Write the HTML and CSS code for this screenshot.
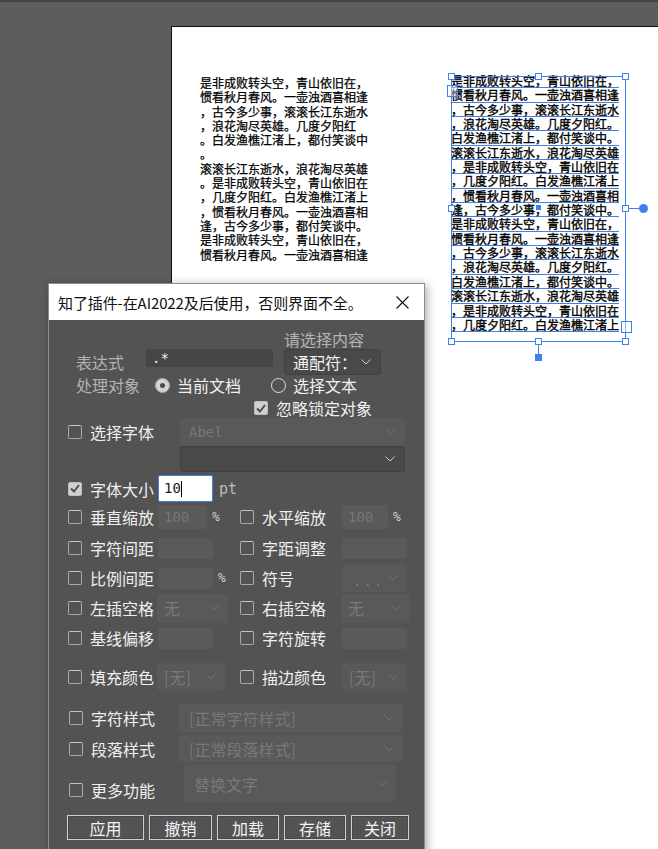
FILE: index.html
```html
<!DOCTYPE html>
<html lang="zh">
<head>
<meta charset="utf-8">
<title>知了插件</title>
<link rel="stylesheet" href="styles.css">
</head>
<body>
<div class="app">
  <div class="topstrip"></div>
  <div class="page">
    <div class="text-left">
      <div>是非成败转头空，青山依旧在，</div>
      <div>惯看秋月春风。一壶浊酒喜相逢</div>
      <div>，古今多少事，滚滚长江东逝水</div>
      <div>，浪花淘尽英雄。几度夕阳红</div>
      <div>。白发渔樵江渚上，都付笑谈中</div>
      <div>。</div>
      <div>滚滚长江东逝水，浪花淘尽英雄</div>
      <div>。是非成败转头空，青山依旧在</div>
      <div>，几度夕阳红。白发渔樵江渚上</div>
      <div>，惯看秋月春风。一壶浊酒喜相</div>
      <div>逢，古今多少事，都付笑谈中。</div>
      <div>是非成败转头空，青山依旧在，</div>
      <div>惯看秋月春风。一壶浊酒喜相逢</div>
    </div>
    <div class="text-right">
      <div>是非成败转头空，青山依旧在，</div>
      <div>惯看秋月春风。一壶浊酒喜相逢</div>
      <div>，古今多少事，滚滚长江东逝水</div>
      <div>，浪花淘尽英雄。几度夕阳红。</div>
      <div>白发渔樵江渚上，都付笑谈中。</div>
      <div>滚滚长江东逝水，浪花淘尽英雄</div>
      <div>，是非成败转头空，青山依旧在</div>
      <div>，几度夕阳红。白发渔樵江渚上</div>
      <div>，惯看秋月春风。一壶浊酒喜相</div>
      <div>逢，古今多少事，都付笑谈中。</div>
      <div>是非成败转头空，青山依旧在，</div>
      <div>惯看秋月春风。一壶浊酒喜相逢</div>
      <div>，古今多少事，滚滚长江东逝水</div>
      <div>，浪花淘尽英雄。几度夕阳红。</div>
      <div>白发渔樵江渚上，都付笑谈中。</div>
      <div>滚滚长江东逝水，浪花淘尽英雄</div>
      <div>，是非成败转头空，青山依旧在</div>
      <div>，几度夕阳红。白发渔樵江渚上</div>
    </div>
    <div class="sel-box"></div>
    <div class="h h-tl"></div>
    <div class="h h-tm"></div>
    <div class="h h-tr"></div>
    <div class="h h-ml"></div>
    <div class="h h-mr"></div>
    <div class="h h-bl"></div>
    <div class="h h-bm"></div>
    <div class="h h-br"></div>
    <div class="center-pt"></div>
    <div class="rot-line"></div>
    <div class="rot-dot"></div>
    <div class="bot-line"></div>
    <div class="bot-sq"></div>
    <div class="port port-in"></div>
    <div class="port port-out"></div>
  </div>

  <div class="dialog">
    <div class="titlebar">
      <span class="title">知了插件-在AI2022及后使用，否则界面不全。</span>
      <svg class="close" width="13" height="13" viewBox="0 0 13 13"><path d="M0.5 0.5 L12.5 12.5 M12.5 0.5 L0.5 12.5" stroke="#111" stroke-width="1.1" fill="none"/></svg>
    </div>
    <div class="body">
      <div class="hint-row"><span class="dim">请选择内容</span></div>
      <div class="expr-row">
        <span class="dim lbl-w">表达式</span>
        <div class="expr-input">.*</div>
        <div class="dd dd-on dd-mode"><span>通配符：</span><svg class="chev" width="10" height="6" viewBox="0 0 10 6"><path d="M0.5 0.5 L5 5 L9.5 0.5" stroke="#cfcfcf" fill="none"/></svg></div>
      </div>
      <div class="target-row">
        <span class="dim lbl-w2">处理对象</span>
        <div class="radio-opt first"><span class="radio on"></span><span>当前文档</span></div>
        <div class="radio-opt"><span class="radio"></span><span>选择文本</span></div>
      </div>
      <div class="ignore-row">
        <span class="cb on"><svg width="10" height="9" viewBox="0 0 10 9"><path d="M1 4.5 L4 7.5 L9 1" stroke="#4d4d4d" stroke-width="2" fill="none"/></svg></span>
        <span>忽略锁定对象</span>
      </div>

      <div class="font-row">
        <div class="opt"><span class="cb"></span><span>选择字体</span></div>
        <div class="font-dds">
          <div class="dd dd-off dd-font1"><span class="mono">Abel</span><svg class="chev" width="10" height="6" viewBox="0 0 10 6"><path d="M0.5 0.5 L5 5 L9.5 0.5" stroke="#707070" fill="none"/></svg></div>
          <div class="dd dd-on dd-font2"><span></span><svg class="chev" width="10" height="6" viewBox="0 0 10 6"><path d="M0.5 0.5 L5 5 L9.5 0.5" stroke="#cfcfcf" fill="none"/></svg></div>
        </div>
      </div>

      <div class="size-row">
        <div class="opt"><span class="cb on"><svg width="10" height="9" viewBox="0 0 10 9"><path d="M1 4.5 L4 7.5 L9 1" stroke="#4d4d4d" stroke-width="2" fill="none"/></svg></span><span>字体大小</span></div>
        <div class="ctl"><div class="size-input">10<span class="caret"></span></div><span class="unit pt">pt</span></div>
      </div>

      <div class="pair row-scale">
        <div class="opt"><span class="cb"></span><span>垂直缩放</span></div>
        <div class="ctl"><div class="inp w50">100</div><span class="unit">%</span></div>
        <div class="opt"><span class="cb"></span><span>水平缩放</span></div>
        <div class="ctl"><div class="inp w46">100</div><span class="unit">%</span></div>
      </div>

      <div class="pair row30 first30">
        <div class="opt"><span class="cb"></span><span>字符间距</span></div>
        <div class="ctl"><div class="inp w55 h21"></div></div>
        <div class="opt"><span class="cb"></span><span>字距调整</span></div>
        <div class="ctl"><div class="inp w65 h21"></div></div>
      </div>
      <div class="pair row30">
        <div class="opt"><span class="cb"></span><span>比例间距</span></div>
        <div class="ctl"><div class="inp w55 h21"></div><span class="unit">%</span></div>
        <div class="opt"><span class="cb"></span><span>符号</span></div>
        <div class="ctl"><div class="dd dd-off w65 h28"><span class="mono dots">...</span><svg class="chev" width="10" height="6" viewBox="0 0 10 6"><path d="M0.5 0.5 L5 5 L9.5 0.5" stroke="#707070" fill="none"/></svg></div></div>
      </div>
      <div class="pair row30">
        <div class="opt"><span class="cb"></span><span>左插空格</span></div>
        <div class="ctl"><div class="dd dd-off w71 h29 shift"><span>无</span><svg class="chev" width="10" height="6" viewBox="0 0 10 6"><path d="M0.5 0.5 L5 5 L9.5 0.5" stroke="#707070" fill="none"/></svg></div></div>
        <div class="opt"><span class="cb"></span><span>右插空格</span></div>
        <div class="ctl"><div class="dd dd-off w69 h29 shift"><span>无</span><svg class="chev" width="10" height="6" viewBox="0 0 10 6"><path d="M0.5 0.5 L5 5 L9.5 0.5" stroke="#707070" fill="none"/></svg></div></div>
      </div>
      <div class="pair row30">
        <div class="opt"><span class="cb"></span><span>基线偏移</span></div>
        <div class="ctl"><div class="inp w55 h21"></div></div>
        <div class="opt"><span class="cb"></span><span>字符旋转</span></div>
        <div class="ctl"><div class="inp w65 h21"></div></div>
      </div>

      <div class="pair row-color">
        <div class="opt"><span class="cb"></span><span>填充颜色</span></div>
        <div class="ctl"><div class="dd dd-off w68 h28 shift"><span>[无]</span><svg class="chev" width="10" height="6" viewBox="0 0 10 6"><path d="M0.5 0.5 L5 5 L9.5 0.5" stroke="#707070" fill="none"/></svg></div></div>
        <div class="opt"><span class="cb"></span><span>描边颜色</span></div>
        <div class="ctl"><div class="dd dd-off w65 h28"><span>[无]</span><svg class="chev" width="10" height="6" viewBox="0 0 10 6"><path d="M0.5 0.5 L5 5 L9.5 0.5" stroke="#707070" fill="none"/></svg></div></div>
      </div>

      <div class="style-row charstyle">
        <div class="opt"><span class="cb"></span><span>字符样式</span></div>
        <div class="dd dd-off wide"><span>[正常字符样式]</span><svg class="chev" width="10" height="6" viewBox="0 0 10 6"><path d="M0.5 0.5 L5 5 L9.5 0.5" stroke="#707070" fill="none"/></svg></div>
      </div>
      <div class="style-row parastyle">
        <div class="opt"><span class="cb"></span><span>段落样式</span></div>
        <div class="dd dd-off wide"><span>[正常段落样式]</span><svg class="chev" width="10" height="6" viewBox="0 0 10 6"><path d="M0.5 0.5 L5 5 L9.5 0.5" stroke="#707070" fill="none"/></svg></div>
      </div>
      <div class="more-row">
        <div class="opt"><span class="cb"></span><span>更多功能</span></div>
        <div class="dd dd-off more"><span>替换文字</span><svg class="chev" width="10" height="6" viewBox="0 0 10 6"><path d="M0.5 0.5 L5 5 L9.5 0.5" stroke="#707070" fill="none"/></svg></div>
      </div>

      <div class="btn-row">
        <button class="btn b1">应用</button>
        <button class="btn b2">撤销</button>
        <button class="btn b3">加载</button>
        <button class="btn b4">存储</button>
        <button class="btn b5">关闭</button>
      </div>
    </div>
  </div>
</div>
</body>
</html>
```

FILE: styles.css
```css
* { box-sizing: border-box; }
html, body { margin: 0; padding: 0; }
body {
  width: 658px;
  height: 849px;
  overflow: hidden;
  background: #5d5d5d;
  font-family: "Noto Sans CJK SC", "Noto Sans", sans-serif;
}
.app {
  position: relative;
  width: 658px;
  height: 849px;
  overflow: hidden;
  background: #5d5d5d;
}
.topstrip {
  height: 2px;
  background: #444444;
}

/* artboard */
.page {
  position: absolute;
  left: 171px;
  top: 26px;
  width: 600px;
  height: 900px;
  background: #ffffff;
  border-top: 1px solid #111;
  border-left: 1px solid #111;
}
.text-left, .text-right {
  position: absolute;
  font-size: 12px;
  color: #000;
  white-space: nowrap;
  -webkit-text-stroke: 0.25px #000;
}
.text-left {
  left: 28px;
  top: 49px;
  line-height: 14.3px;
}
.text-left div { height: 14.3px; }
.text-right {
  left: 279px;
  top: 47px;
  line-height: 14.35px;
  -webkit-text-stroke: 0.35px #000;
}
.text-right div {
  width: 168px;
  height: 14.35px;
  background: linear-gradient(#3d82f0, #3d82f0) left bottom / 100% 1px no-repeat;
}

/* selection */
.sel-box {
  position: absolute;
  left: 279px;
  top: 49px;
  width: 175px;
  height: 266px;
  border: 1px solid #3d82f0;
}
.h {
  position: absolute;
  width: 7px;
  height: 7px;
  background: #fff;
  border: 1px solid #3d82f0;
}
.h-tl { left: 276px; top: 46px; }
.h-tm { left: 363px; top: 46px; }
.h-tr { left: 450px; top: 46px; }
.h-ml { left: 276px; top: 178px; }
.h-mr { left: 450px; top: 178px; }
.h-bl { left: 276px; top: 311px; }
.h-bm { left: 363px; top: 311px; }
.h-br { left: 450px; top: 311px; }
.center-pt {
  position: absolute;
  left: 364px; top: 178px;
  width: 5px; height: 5px;
  background: #3d82f0;
}
.rot-line {
  position: absolute;
  left: 457px; top: 181px;
  width: 12px; height: 1px;
  background: #3d82f0;
}
.rot-dot {
  position: absolute;
  left: 467px; top: 177px;
  width: 9px; height: 9px;
  border-radius: 50%;
  background: #3d82f0;
}
.bot-line {
  position: absolute;
  left: 366px; top: 318px;
  width: 1px; height: 10px;
  background: #3d82f0;
}
.bot-sq {
  position: absolute;
  left: 363px; top: 327px;
  width: 7px; height: 7px;
  background: #3d82f0;
}
.port {
  position: absolute;
  width: 11px;
  height: 12px;
  border: 1px solid #3d82f0;
  background: rgba(255,255,255,0.4);
}
.port-in { left: 275px; top: 58px; }
.port-out { left: 449px; top: 294px; }

/* dialog */
.dialog {
  position: absolute;
  left: 48px;
  top: 283px;
  width: 377px;
  height: 600px;
  border: 1px solid #8c8c8c;
  background: #535353;
  box-shadow: 2px 2px 9px rgba(0,0,0,0.35);
  color: #ececec;
  font-size: 16px;
}
.titlebar {
  height: 36px;
  background: #ffffff;
  display: flex;
  align-items: center;
  justify-content: space-between;
  padding: 0 15px 0 9px;
}
.title {
  font-size: 15px;
  color: #111;
  letter-spacing: -0.1px;
}
.close { display: block; }

.body {
  padding-top: 10px;
  line-height: 20px;
}
.dim { color: #b3b3b3; }

.hint-row {
  height: 19px;
  padding-left: 235px;
  line-height: 19px;
}
.expr-row {
  display: flex;
  align-items: center;
  height: 26px;
  padding-left: 27px;
}
.lbl-w { width: 70px; }
.expr-input {
  align-self: flex-start;
  width: 127px;
  height: 18px;
  background: #454545;
  border-radius: 2px;
  color: #f0f0f0;
  font-family: "DejaVu Sans Mono", monospace;
  font-size: 14px;
  line-height: 18px;
  padding-left: 6px;
}
.dd {
  display: flex;
  align-items: center;
  justify-content: space-between;
  border-radius: 3px;
  padding: 0 9px 0 7px;
}
.dd-on {
  background: #494949;
  border: 1px solid #404040;
  color: #f2f2f2;
}
.dd-off {
  background: #595959;
  color: #787878;
}
.chev { display: block; flex: none; }
.dd-mode {
  width: 97px;
  height: 26px;
  margin-left: 11px;
  padding-left: 8px;
}

.target-row {
  display: flex;
  align-items: center;
  height: 20px;
  padding-left: 27px;
}
.lbl-w2 { width: 79px; }
.radio-opt {
  display: flex;
  align-items: center;
  gap: 7px;
  color: #f0f0f0;
}
.radio-opt.first { width: 116px; }
.radio {
  width: 15px;
  height: 15px;
  border-radius: 50%;
  border: 1.5px solid #dedede;
  display: flex;
  align-items: center;
  justify-content: center;
}
.radio.on {
  background: #d4d4d4;
  border: 1px solid #a8a8a8;
}
.radio.on::after {
  content: "";
  width: 5px;
  height: 5px;
  border-radius: 50%;
  background: #4a4a4a;
}

.ignore-row {
  display: flex;
  align-items: center;
  gap: 8px;
  height: 20px;
  margin-top: 3px;
  padding-left: 205px;
  color: #f0f0f0;
}

.cb {
  flex: none;
  width: 14px;
  height: 14px;
  border: 1px solid #a9a9a9;
  border-top-color: #c4c4c4;
  border-radius: 2px;
  display: flex;
  align-items: center;
  justify-content: center;
}
.cb.on {
  background: #d0d0d0;
  border-color: #bdbdbd;
}
.cb svg { display: block; }
.opt {
  display: flex;
  align-items: center;
  gap: 8px;
  color: #efefef;
  white-space: nowrap;
}

.font-row {
  display: grid;
  grid-template-columns: 112px 225px;
  height: 54px;
  padding-left: 19px;
}
.font-row .opt {
  align-self: start;
  height: 28px;
}
.font-dds { display: flex; flex-direction: column; }
.dd-font1 { height: 28px; border-radius: 3px 3px 0 0; }
.dd-font2 { height: 26px; }
.mono {
  font-family: "DejaVu Sans Mono", monospace;
  font-size: 14px;
}
.dd-font1 .mono { padding-left: 2px; }

.size-row {
  display: grid;
  grid-template-columns: 90px 160px;
  height: 27px;
  margin-top: 3px;
  padding-left: 19px;
  align-items: center;
}
.ctl {
  display: flex;
  align-items: center;
  gap: 5px;
}
.size-input {
  width: 55px;
  height: 27px;
  background: #ffffff;
  border: 1px solid #3f86dc;
  border-radius: 2px;
  color: #222;
  font-family: "DejaVu Sans Mono", monospace;
  font-size: 14px;
  line-height: 25px;
  padding-left: 5px;
  display: flex;
  align-items: center;
}
.caret {
  display: inline-block;
  width: 1px;
  height: 16px;
  background: #000;
}
.unit {
  font-family: "DejaVu Sans Mono", monospace;
  font-size: 13px;
  color: #cfcfcf;
}
.unit.pt { color: #bdbdbd; font-size: 15px; padding-left: 1px; }

.pair {
  display: grid;
  grid-template-columns: 90px 82px 102px 70px;
  padding-left: 19px;
  align-items: center;
}
.row-scale { height: 24px; margin-top: 3px; }
.row30 { height: 30px; }
.first30 { margin-top: 4px; }
.row-color { height: 28px; margin-top: 10px; }

.inp {
  background: #5a5a5a;
  border-radius: 2px;
  color: #777;
  font-family: "DejaVu Sans Mono", monospace;
  font-size: 14px;
  line-height: 24px;
  height: 24px;
  padding-left: 6px;
}
.w50 { width: 49px; }
.w46 { width: 46px; }
.w55 { width: 55px; }
.w65 { width: 65px; }
.w68 { width: 68px; }
.w69 { width: 69px; }
.w71 { width: 71px; }
.h21 { height: 21px; }
.h28 { height: 28px; }
.h29 { height: 29px; }
.shift { margin-left: -1px; }
.dots { letter-spacing: 2px; padding-left: 4px; padding-top: 6px; }

.style-row {
  display: grid;
  grid-template-columns: 110px 224px;
  padding-left: 20px;
  align-items: center;
}
.charstyle { height: 28px; margin-top: 13px; }
.parastyle { height: 27px; margin-top: 3px; }
.wide { height: 100%; padding-left: 10px; }

.more-row {
  display: grid;
  grid-template-columns: 115px 212px;
  padding-left: 20px;
  height: 37px;
  margin-top: 3px;
  align-items: center;
}
.more-row .opt { margin-top: 13px; }
.more { height: 37px; padding-left: 10px; }

.btn-row {
  display: flex;
  gap: 5px;
  margin-top: 13px;
  padding-left: 18px;
}
.btn {
  height: 25px;
  background: #535353;
  border: 1px solid #d0d0d0;
  box-shadow: inset 0 0 0 1px #474747;
  border-radius: 0;
  color: #f4f4f4;
  font-family: "Noto Sans CJK SC", sans-serif;
  font-size: 16px;
  line-height: 20px;
  padding: 0;
}
.b1 { width: 77px; }
.b2 { width: 63px; }
.b3 { width: 62px; }
.b4 { width: 62px; }
.b5 { width: 58px; }
```
